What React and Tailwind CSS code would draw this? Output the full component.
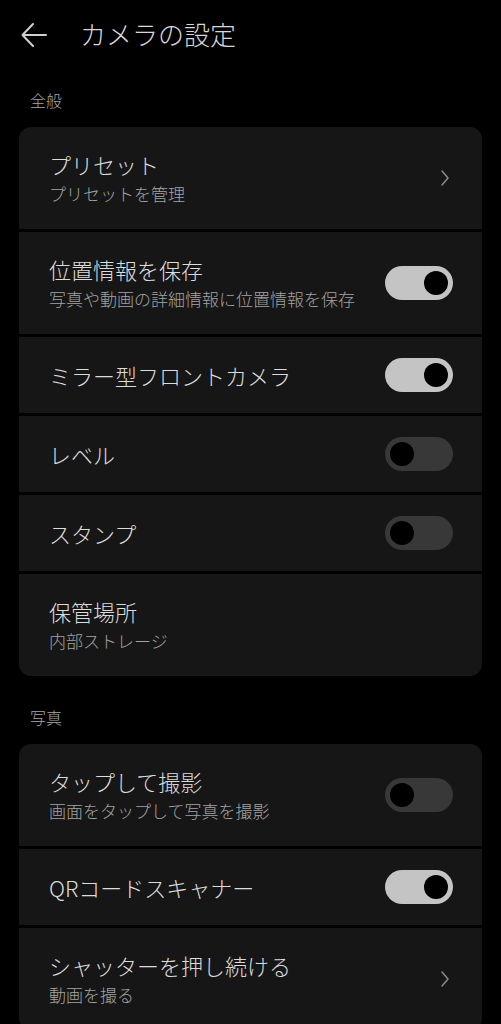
import React from "react";

const font = { fontFamily: '"Noto Sans CJK JP", "Noto Sans", sans-serif' };

const Toggle = ({ on }) => (
  <div
    className={
      "relative h-[34px] w-[68px] shrink-0 rounded-full " +
      (on ? "bg-[#c4c4c4]" : "bg-[#383838]")
    }
  >
    <div
      className={
        "absolute top-[5px] h-[24px] w-[24px] rounded-full bg-black " +
        (on ? "right-[5px]" : "left-[5px]")
      }
    />
  </div>
);

const Chevron = () => (
  <svg width="10" height="18" viewBox="0 0 10 18" className="mr-[3px] shrink-0">
    <polyline
      points="2,2 8,9 2,16"
      fill="none"
      stroke="#8a8a8a"
      strokeWidth="1.5"
      strokeLinecap="round"
      strokeLinejoin="round"
    />
  </svg>
);

const Row = ({ title, sub, right }) => (
  <div
    className={
      "flex items-center justify-between bg-[#161616] pl-[30px] pr-[29px] " +
      (sub ? "h-[102px]" : "h-[76px]")
    }
  >
    <div className="flex flex-col gap-[4px]">
      <div className="text-[22px] font-light leading-[28px] text-[#dcdcdc]">{title}</div>
      {sub && <div className="text-[17px] font-light leading-[24px] text-[#a3a3a3]">{sub}</div>}
    </div>
    {right === "chevron" && <Chevron />}
    {right === "on" && <Toggle on />}
    {right === "off" && <Toggle on={false} />}
  </div>
);

const Card = ({ children }) => (
  <div className="mx-[19px] flex flex-col gap-[3px] overflow-hidden rounded-[12px] bg-black">
    {children}
  </div>
);

export default function App() {
  return (
    <div className="min-h-[1024px] w-full overflow-hidden bg-black" style={font}>
      <div className="flex h-[72px] items-center">
        <svg width="28" height="28" viewBox="0 0 28 28" className="ml-[20px] -mt-[2px]">
          <path
            d="M26 14H3M13 3L2.5 14L13 25"
            fill="none"
            stroke="#cfcfcf"
            strokeWidth="2"
            strokeLinecap="round"
            strokeLinejoin="round"
          />
        </svg>
        <div className="ml-[32px] -mt-[4px] text-[26px] font-light leading-[34px] text-[#d8d8d8]">カメラの設定</div>
      </div>

      <div className="mt-[16px] mb-[15px] pl-[30px] text-[16px] font-light leading-[24px] text-[#a8a8a8]">全般</div>
      <Card>
        <Row title="プリセット" sub="プリセットを管理" right="chevron" />
        <Row title="位置情報を保存" sub="写真や動画の詳細情報に位置情報を保存" right="on" />
        <Row title="ミラー型フロントカメラ" right="on" />
        <Row title="レベル" right="off" />
        <Row title="スタンプ" right="off" />
        <Row title="保管場所" sub="内部ストレージ" />
      </Card>

      <div className="mt-[29px] mb-[15px] pl-[30px] text-[16px] font-light leading-[24px] text-[#a8a8a8]">写真</div>
      <Card>
        <Row title="タップして撮影" sub="画面をタップして写真を撮影" right="off" />
        <Row title="QRコードスキャナー" right="on" />
        <Row title="シャッターを押し続ける" sub="動画を撮る" right="chevron" />
      </Card>
    </div>
  );
}
